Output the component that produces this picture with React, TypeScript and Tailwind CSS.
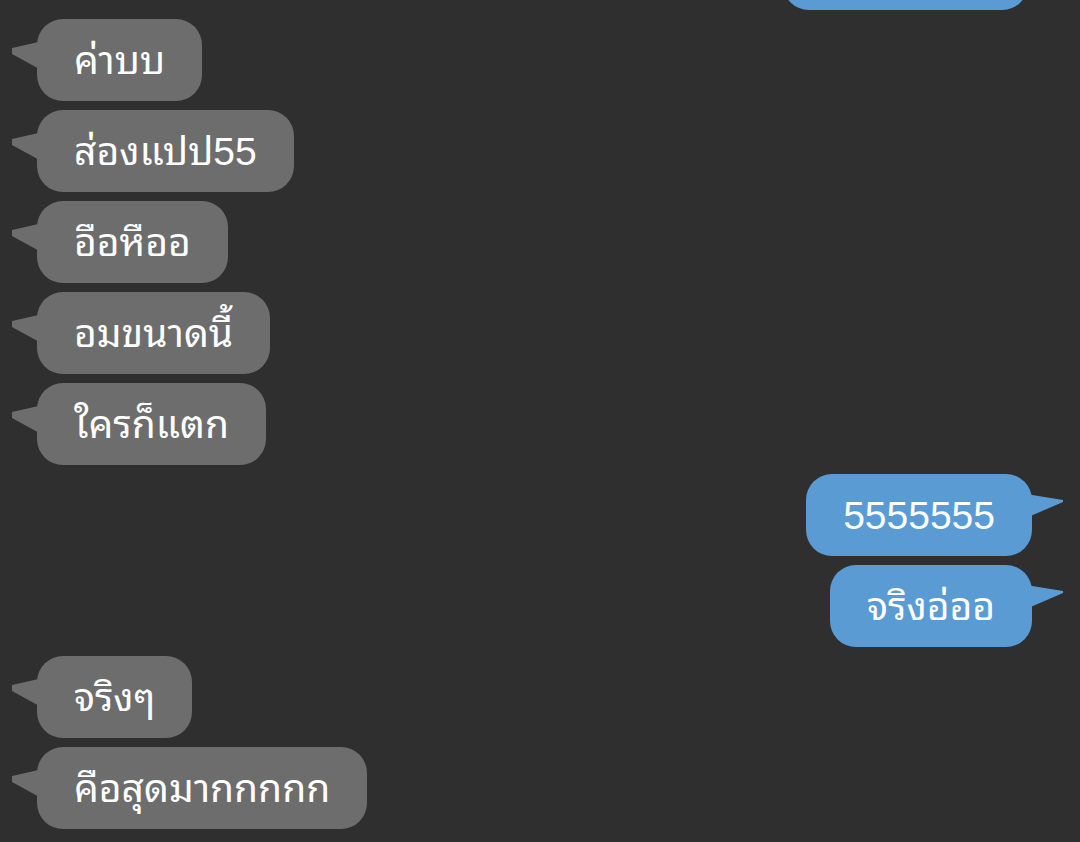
const messages: { text: string; me: boolean }[] = [
  { text: "ค่าบบ", me: false },
  { text: "ส่องแปป55", me: false },
  { text: "อือหืออ", me: false },
  { text: "อมขนาดนี้", me: false },
  { text: "ใครก็แตก", me: false },
  { text: "5555555", me: true },
  { text: "จริงอ่ออ", me: true },
  { text: "จริงๆ", me: false },
  { text: "คือสุดมากกกกก", me: false },
];

function Tail({ me }: { me: boolean }) {
  return me ? (
    <svg className="absolute right-[-31px] top-[20px]" width="37" height="24" viewBox="0 0 37 24">
      <polygon points="0,0 37,6 37,8 0,24" fill="#5a9bd4" />
    </svg>
  ) : (
    <svg className="absolute left-[-25px] top-[22px]" width="31" height="30" viewBox="0 0 31 30">
      <polygon points="31,0 0,7 0,13 31,30" fill="#6d6d6d" />
    </svg>
  );
}

function Bubble({ text, me }: { text: string; me: boolean }) {
  return (
    <div className={me ? "flex justify-end pr-[48px]" : "flex justify-start pl-[37px]"}>
      <div
        className={`relative h-[82px] flex items-center px-[37px] rounded-[26px] text-white text-[39px] leading-none ${
          me ? "bg-[#5a9bd4]" : "bg-[#6d6d6d]"
        }`}
      >
        <Tail me={me} />
        <span className="whitespace-nowrap">{text}</span>
      </div>
    </div>
  );
}

export default function App() {
  return (
    <div
      className="w-[1080px] h-[842px] overflow-hidden bg-[#2f2f2f]"
      style={{ fontFamily: '"Liberation Sans", "Noto Sans Thai Looped", "Noto Serif Thai", "Noto Sans Thai", sans-serif' }}
    >
      <div className="flex flex-col gap-[9px] mt-[-72px]">
        {/* previous message, scrolled mostly out of view */}
        <div className="flex justify-end pr-[52px]">
          <div className="h-[82px] w-[245px] rounded-[26px] bg-[#5a9bd4]" />
        </div>
        {messages.map((m, i) => (
          <Bubble key={i} text={m.text} me={m.me} />
        ))}
      </div>
    </div>
  );
}
